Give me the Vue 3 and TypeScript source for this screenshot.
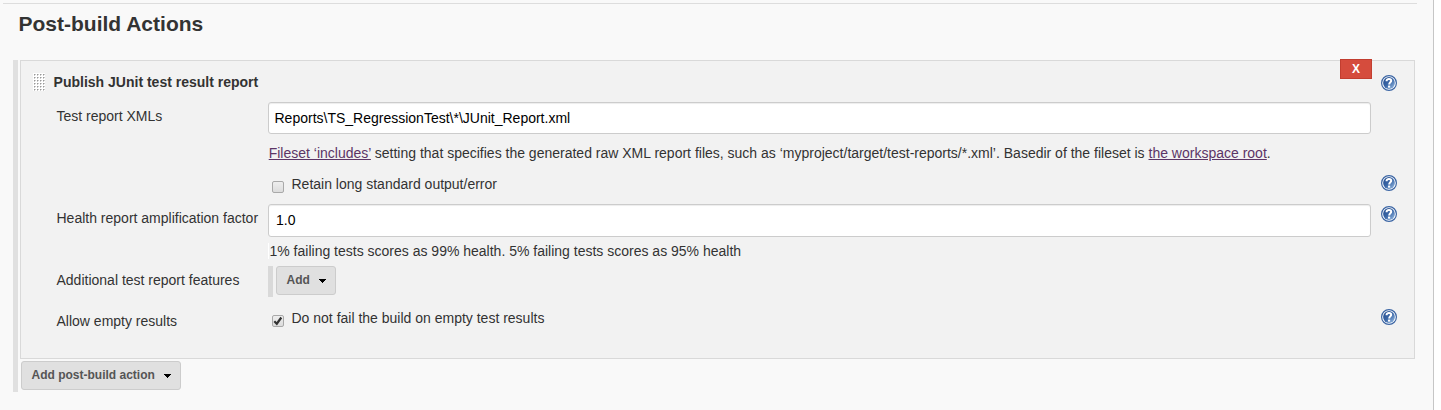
<script setup lang="ts">
import { ref } from 'vue'

const reportXmls = ref('Reports\\TS_RegressionTest\\*\\JUnit_Report.xml')
const healthFactor = ref('1.0')
const retainOutput = ref(false)
const allowEmpty = ref(true)
</script>

<template>
  <svg class="defs" width="0" height="0" aria-hidden="true">
    <defs>
      <linearGradient id="helpFill" x1="0" y1="0" x2="1" y2="1">
        <stop offset="0.15" stop-color="#2a5394" />
        <stop offset="0.5" stop-color="#3c68a8" />
        <stop offset="0.9" stop-color="#8db2dc" />
      </linearGradient>
      <symbol id="help" viewBox="0 0 16 16">
        <circle cx="8" cy="8" r="7.4" fill="#fff" stroke="#3a64a3" stroke-width="1.2" />
        <circle cx="8" cy="8" r="5.9" fill="url(#helpFill)" />
        <path d="M5.6 6.2V5.6C5.9 3.4 10.2 3.3 10.2 5.8C10.2 7.4 8.2 7.3 8.2 9.5" fill="none" stroke="#fff" stroke-width="2" />
        <rect x="7" y="10.6" width="2.2" height="2" fill="#fff" />
      </symbol>
    </defs>
  </svg>
  <main class="page">
    <div class="rule"></div>
    <h1>Post-build Actions</h1>
    <div class="actions">
      <section class="panel">
        <header class="row title-row">
          <svg class="grip" viewBox="0 0 12 18">
            <defs>
              <pattern id="dots" width="3" height="3" patternUnits="userSpaceOnUse">
                <path d="M1 1H3V2H2V3H1Z" fill="#ccc" />
                <path d="M1 1H2V2H1Z" fill="#999" />
              </pattern>
            </defs>
            <rect width="12" height="18" fill="#fff" />
            <rect width="12" height="18" fill="url(#dots)" />
          </svg>
          <h2>Publish JUnit test result report</h2>
          <button class="remove" type="button">X</button>
          <svg class="help title"><use href="#help" /></svg>
        </header>
        <div class="row xml-row">
          <span class="label">Test report XMLs</span>
          <input v-model="reportXmls" class="field" type="text" />
        </div>
        <div class="row desc-row">
          <p><a>Fileset ‘includes’</a> setting that specifies the generated raw XML report files, such as ‘myproject/target/test-reports/*.xml’. Basedir of the fileset is <a>the workspace root</a>.</p>
        </div>
        <div class="row retain-row">
          <label class="check">
            <span class="box" @click="retainOutput = !retainOutput">
              <svg v-if="retainOutput" viewBox="0 0 12 12"><path d="M2.3 6.2L4.8 8.7L9.3 2.5" /></svg>
            </span>
            <span>Retain long standard output/error</span>
          </label>
          <svg class="help retain"><use href="#help" /></svg>
        </div>
        <div class="row health-row">
          <span class="label">Health report amplification factor</span>
          <input v-model="healthFactor" class="field" type="text" />
          <svg class="help health"><use href="#help" /></svg>
        </div>
        <div class="row score-row">
          <p>1% failing tests scores as 99% health. 5% failing tests scores as 95% health</p>
        </div>
        <div class="row add-row">
          <span class="label">Additional test report features</span>
          <div class="add-wrap">
            <button class="menu small" type="button"><span>Add</span><svg class="caret" viewBox="0 0 7 4"><path d="M0 0H7V1H6V2H5V3H4V4H3V3H2V2H1V1H0Z" /></svg></button>
          </div>
        </div>
        <div class="row empty-row">
          <span class="label">Allow empty results</span>
          <label class="check">
            <span class="box" @click="allowEmpty = !allowEmpty">
              <svg v-if="allowEmpty" viewBox="0 0 12 12"><path d="M2.3 6.2L4.8 8.7L9.3 2.5" /></svg>
            </span>
            <span>Do not fail the build on empty test results</span>
          </label>
          <svg class="help empty"><use href="#help" /></svg>
        </div>
      </section>
      <button class="menu large" type="button"><span>Add post-build action</span><svg class="caret" viewBox="0 0 7 4"><path d="M0 0H7V1H6V2H5V3H4V4H3V3H2V2H1V1H0Z" /></svg></button>
    </div>
  </main>
</template>

<style>
body {
  margin: 0;
  background: #fff;
  overflow: hidden;
}
</style>

<style scoped>
* {
  box-sizing: border-box;
}
.defs {
  position: absolute;
}
.page {
  width: 1434px;
  height: 410px;
  padding-top: 3px;
  background: #f9f9f9;
  border-right: 1px solid #c6c6c6;
  color: #333;
  font: 14px/20px "Liberation Sans", Arial, sans-serif;
}
.rule {
  height: 1px;
  width: 1414px;
  margin-left: 3px;
  background: #ddd;
}
h1 {
  margin: 6px 0 0 18.5px;
  height: 50px;
  font-size: 21px;
  line-height: 28px;
  font-weight: bold;
}
.actions {
  margin-left: 13px;
  width: 1402px;
  height: 332px;
  border-left: 5px solid #e0e0e0;
  padding-left: 2px;
}
.panel {
  width: 1395px;
  height: 299px;
  border: 1px solid #d9d9d9;
  background: #f2f2f2;
}
.row {
  display: grid;
  grid-template-columns: 212px 1103px 16px;
  column-gap: 0;
  align-items: start;
  margin-left: 35px;
}
.label {
  grid-column: 1;
  padding-left: 0.5px;
  white-space: nowrap;
}
.row > .help {
  grid-column: 3;
  width: 16px;
  height: 16px;
  margin-left: 10px;
}
.title-row {
  display: flex;
  height: 41px;
  margin-left: 12px;
}
.grip {
  flex: none;
  width: 12px;
  height: 18px;
  margin-top: 12px;
}
h2 {
  margin: 11px 0 0 8px;
  padding-left: 0.6px;
  width: 1287px;
  font-size: 14px;
  line-height: 20px;
}
.remove {
  flex: none;
  width: 32px;
  height: 20px;
  margin-top: -2px;
  padding: 0;
  border: 1px solid #c23e30;
  background: #d54c3d;
  color: #fff;
  font: bold 12px/18px "Liberation Sans", Arial, sans-serif;
}
.row > .help.title {
  margin: 14px 0 0 9px;
}
.field {
  grid-column: 2;
  width: 1103px;
  height: 32px;
  padding: 0 5.5px;
  border: 1px solid #ccc;
  border-radius: 3px;
  outline: none;
  background: #fff;
  box-shadow: inset 0 1px 1px rgba(0, 0, 0, 0.075);
  color: #000;
  font: 14px/20px "Liberation Sans", Arial, sans-serif;
}
.xml-row {
  height: 41px;
}
.xml-row .label {
  margin-top: 4px;
}
.desc-row {
  height: 30px;
}
.desc-row p {
  padding-left: 0.7px;
}
.row p {
  grid-column: 2;
  margin: 0;
  white-space: nowrap;
}
a {
  color: #5c3566;
  text-decoration: underline;
}
.check {
  grid-column: 2;
  display: flex;
  margin-left: 4px;
}
.box {
  width: 12px;
  height: 12px;
  margin: 7px 7.5px 0 0;
  border: 1px solid #a9a9a9;
  border-radius: 2px;
  background: linear-gradient(#eee, #dcdcdc);
}
.box svg {
  display: block;
  width: 12px;
  height: 12px;
  margin: -1px;
}
.box path {
  fill: none;
  stroke: #333;
  stroke-width: 2.2;
}
.retain-row {
  height: 31px;
  padding-top: 1px;
}
.help.retain {
  margin-top: 1px;
}
.help.health {
  margin-top: 2px;
}
.health-row {
  height: 37px;
}
.health-row .field {
  height: 33px;
  padding: 0 7px 2px;
}
.health-row .label {
  margin-top: 4px;
}
.score-row {
  height: 25px;
}
.score-row p {
  padding-left: 0.5px;
  border-left: 1px solid #fff;
  height: 16px;
  margin-top: 2px;
  line-height: 16px;
}
.add-row {
  height: 42px;
}
.add-row .label {
  margin-top: 4px;
}
.add-wrap {
  grid-column: 2;
  height: 31px;
  border-left: 5px solid #d9d9d9;
  padding-left: 3px;
}
.menu {
  display: flex;
  align-items: center;
  height: 29px;
  padding: 0 9px 1px 9.5px;
  border: 1px solid #ccc;
  border-radius: 3px;
  background: #e0e0e0;
  color: #555;
  font: bold 12px/20px "Liberation Sans", Arial, sans-serif;
  white-space: nowrap;
}
.menu.small {
  width: 60px;
}
.menu.large {
  width: 160px;
  margin: 2px 0 0 1px;
}
.caret {
  width: 7px;
  height: 4px;
  margin: 2px 0 0 auto;
  fill: #000;
}
.empty-row .label {
  margin-top: 3px;
}
.help.empty {
  margin-top: 1px;
}
</style>
